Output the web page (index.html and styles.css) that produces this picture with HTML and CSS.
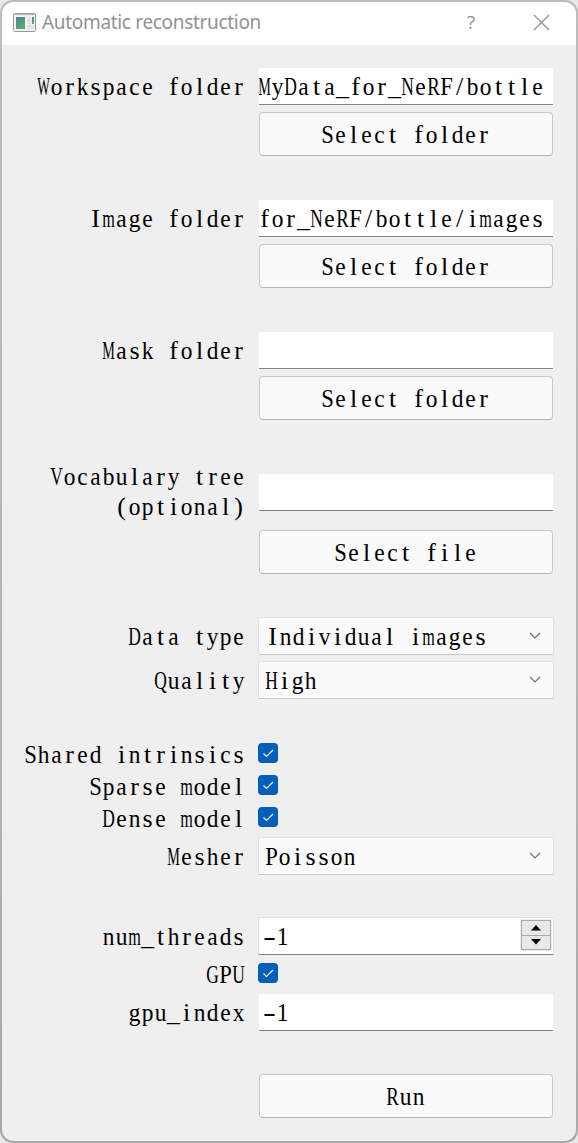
FILE: index.html
```
<!DOCTYPE html>
<html lang="en">
<head>
<meta charset="utf-8">
<title>Automatic reconstruction</title>
<link rel="stylesheet" href="styles.css">
</head>
<body>
<main class="window">
  <header class="titlebar">
    <svg class="app-icon" width="23" height="19" viewBox="0 0 23 19">
      <defs><linearGradient id="view" x1="0" y1="0" x2="0.5" y2="1"><stop offset="0" stop-color="#477f9e"/><stop offset="1" stop-color="#5cab70"/></linearGradient></defs>
      <rect x=".5" y=".5" width="22" height="18" rx="1" fill="#f2f2f2" stroke="#93989e"/>
      <path d="M1 1.5h21" stroke="#b5bbc3"/>
      <rect x="3" y="4" width="9" height="12" fill="url(#view)"/>
      <path d="M14 4h4v7h-4zM14 12h7v4h-7z" fill="#e4e4e4"/>
      <rect x="19" y="4" width="2" height="7" fill="url(#view)"/>
    </svg>
    <span class="title">Automatic reconstruction</span>
    <span class="help">?</span>
    <svg class="close" width="17" height="17" viewBox="0 0 17 17"><path d="M1 1l15 15M16 1L1 16" stroke="#929292" stroke-width="1.3" fill="none"/></svg>
  </header>
  <form class="form">
    <div class="row line"><label class="label"><span class="mono">Workspace folder</span></label><div class="field end"><span class="mono">MyData_for_NeRF/bottle</span></div></div>
    <div class="row action"><button type="button" class="button"><span class="mono">Select folder</span></button></div>
    <div class="row line section"><label class="label"><span class="mono">Image folder</span></label><div class="field end"><span class="mono">for_NeRF/bottle/images</span></div></div>
    <div class="row action"><button type="button" class="button"><span class="mono">Select folder</span></button></div>
    <div class="row line section"><label class="label"><span class="mono">Mask folder</span></label><div class="field"></div></div>
    <div class="row action"><button type="button" class="button"><span class="mono">Select folder</span></button></div>
    <div class="row vocabulary"><label class="label"><span class="mono">Vocabulary tree</span><span class="mono">(optional)</span></label><div class="field"></div></div>
    <div class="row action file"><button type="button" class="button"><span class="mono">Select file</span></button></div>
    <div class="row choice type"><label class="label"><span class="mono">Data type</span></label><div class="combo first"><span class="mono">Individual images</span><svg class="chevron" width="12" height="8" viewBox="0 0 12 8"><path d="M1 1l5 5 5-5"/></svg></div></div>
    <div class="row choice quality"><label class="label"><span class="mono">Quality</span></label><div class="combo"><span class="mono">High</span><svg class="chevron" width="12" height="8" viewBox="0 0 12 8"><path d="M1 1l5 5 5-5"/></svg></div></div>
    <div class="row check checks"><label class="label"><span class="mono">Shared intrinsics</span></label><span class="box"><svg width="20" height="20" viewBox="0 0 20 20"><path d="M5.5 10.5l3 3 6.5-6.5"/></svg></span></div>
    <div class="row check"><label class="label"><span class="mono">Sparse model</span></label><span class="box"><svg width="20" height="20" viewBox="0 0 20 20"><path d="M5.5 10.5l3 3 6.5-6.5"/></svg></span></div>
    <div class="row check"><label class="label"><span class="mono">Dense model</span></label><span class="box"><svg width="20" height="20" viewBox="0 0 20 20"><path d="M5.5 10.5l3 3 6.5-6.5"/></svg></span></div>
    <div class="row choice mesher"><label class="label"><span class="mono">Mesher</span></label><div class="combo"><span class="mono">Poisson</span><svg class="chevron" width="12" height="8" viewBox="0 0 12 8"><path d="M1 1l5 5 5-5"/></svg></div></div>
    <div class="row threads"><label class="label"><span class="mono">num_threads</span></label><div class="field spin"><span class="mono">-1</span><div class="stepper"><span><svg width="10" height="6" viewBox="0 0 10 6"><path d="M0 5.5L5 0l5 5.5z"/></svg></span><span><svg width="10" height="6" viewBox="0 0 10 6"><path d="M0 0h10L5 5.5z"/></svg></span></div></div></div>
    <div class="row check gpu"><label class="label"><span class="mono">GPU</span></label><span class="box"><svg width="20" height="20" viewBox="0 0 20 20"><path d="M5.5 10.5l3 3 6.5-6.5"/></svg></span></div>
    <div class="row line index"><label class="label"><span class="mono">gpu_index</span></label><div class="field"><span class="mono">-1</span></div></div>
    <div class="row action run"><button type="button" class="button"><span class="mono">Run</span></button></div>
  </form>
</main>
<script src="spacing.js"></script>
</body>
</html>
```
FILE: styles.css
```
* { box-sizing: border-box; }
body {
  margin: 0;
  height: 1143px;
  padding: 2px;
  background: linear-gradient(#bdbdbd, #b4b4b4 60%, #a9a9a9);
  overflow: hidden;
  border-radius: 13px;
}
html { background: #e8e8e8; }
.window { height: 1139px; background: #efefef; border-radius: 12px; overflow: hidden; }
.titlebar {
  height: 43px;
  padding: 0 26px 3px 11px;
  display: flex;
  align-items: center;
  background: #fff;
  color: #929292;
  font: 19px/28px "Noto Sans", sans-serif;
}
.title { margin-left: 6px; width: 220px; white-space: nowrap; }
.help { margin-left: 205px; font: 19px/28px "Open Sans", sans-serif; }
.close { margin-left: auto; }
.form { padding: 23px 23px 0 0; display: flex; flex-direction: column; }
.row { display: grid; grid-template-columns: 244px 294px; column-gap: 13px; flex: none; align-items: center; }
.label { display: flex; flex-direction: column; align-items: flex-end; min-width: 0; }
.mono {
  display: flex;
  height: 30px;
  padding-top: 1px;
  font: 26px/30px "Liberation Serif", serif;
  color: #000;
  white-space: pre;
  flex: none;
}
.label .mono, .button .mono { margin-right: 1px; }
.glyph { width: 13px; height: 30px; flex: none; display: flex; justify-content: center; }
.line { height: 37px; }
.line .label { margin-bottom: 2px; }
.field {
  height: 37px;
  display: flex;
  align-items: center;
  padding: 0 9px 0 4px;
  background: #fff;
  border-bottom: 1px solid #868686;
  overflow: hidden;
}
.end { justify-content: flex-end; }
.action { height: 44px; margin-top: 7px; }
.button {
  grid-column: 2;
  height: 44px;
  padding: 0;
  display: flex;
  align-items: center;
  justify-content: center;
  background: #fafafa;
  border: 1px solid #c8c8c8;
  border-bottom-color: #b5b5b5;
  border-radius: 4px;
}
.section { margin-top: 44px; }
.vocabulary { height: 60px; margin-top: 41px; }
.vocabulary .field { margin-top: 3px; }
.file { margin-top: 9px; }
.choice { height: 38px; }
.type { margin-top: 43px; }
.quality { margin-top: 6px; }
.combo {
  height: 38px;
  margin: 0 -1px;
  padding: 0 12px 0 6px;
  display: flex;
  align-items: center;
  justify-content: space-between;
  background: #fafafa;
  border: 1px solid #e1e1e1;
  border-bottom-color: #c8c8c8;
  border-radius: 2px;
}
.first { padding-left: 7px; }
.chevron { fill: none; stroke: #6b6b6b; stroke-width: 1.2; }
.check { height: 32px; }
.checks { margin-top: 39px; }
.box { width: 20px; height: 20px; margin: 0 0 2px -1px; border-radius: 4px; background: #005fb8; }
.box svg { display: block; fill: none; stroke: #fff; stroke-width: 1.1; }
.mesher { margin-top: 3px; }
.threads { height: 38px; margin-top: 42px; }
.spin { height: 38px; margin: 0 -1px; padding: 0 2px 0 4px; justify-content: space-between; border: 1px solid #e1e1e1; border-bottom-color: #868686; }
.stepper { width: 30px; height: 30px; margin-bottom: 3px; display: grid; grid-template-rows: 14px 13px; gap: 1px; padding: 1px; background: #a9a9a9; outline: 1px solid #efefef; }
.stepper span { display: flex; align-items: center; justify-content: center; background: #e8e8e8; }
.gpu { margin-top: 3px; }
.index { margin-top: 4px; }
.run { margin-top: 43px; }
```
FILE: spacing.js
```
// Sets each character in a 13px cell; wide ones are narrowed to fit.
const pen = document.createElement("canvas").getContext("2d");
pen.font = '26px "Liberation Serif"';
for (const line of document.querySelectorAll(".mono")) {
  const text = line.textContent;
  line.textContent = "";
  for (const char of text) {
    const glyph = document.createElement("span");
    glyph.className = "glyph";
    glyph.textContent = char;
    const width = pen.measureText(char).width;
    let scale = Math.min(12.6 / width, 1);
    if (width > 11 && width < 13.5) scale = 0.9;
    if (char === "_") scale = 1;
    if (char === "-") scale = 1.5;
    glyph.style.transform = `scaleX(${scale.toFixed(3)})`;
    line.append(glyph);
  }
}
// Fits the caption to its measured length.
const title = document.querySelector(".title");
const range = document.createRange();
range.selectNodeContents(title);
title.style.letterSpacing = (219 - range.getBoundingClientRect().width) / title.textContent.length + "px";
```
